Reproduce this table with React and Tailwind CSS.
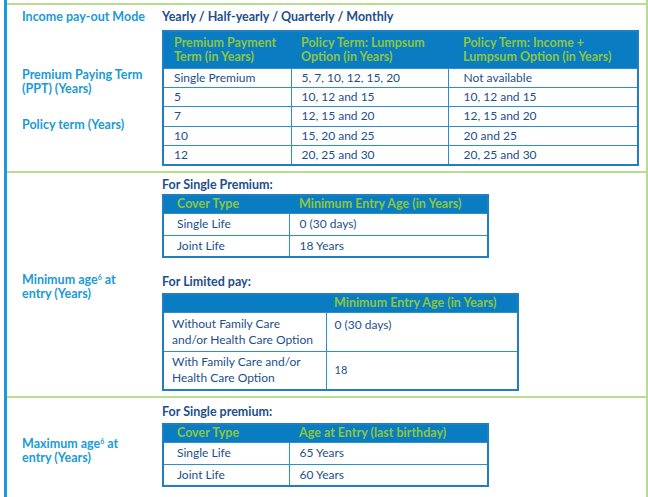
import React from "react";

const navy = "text-[#1d4f8c]";

const HeadCell = ({ children, className = "" }) => (
    <th className={`text-left align-middle font-bold text-[#8cc63f] text-[12.5px] leading-[14px] ${className}`}>{children}</th>
);

const Cell = ({ children, className = "" }) => (
    <td className={`border border-[#2e8fd0] align-middle ${navy} ${className}`}>{children}</td>
);

const Label = ({ children, className = "" }) => (
    <div className={`font-bold text-[#1b9ad7] text-[12.5px] leading-[14px] ${className}`}>{children}</div>
);

const Heading = ({ children, className = "" }) => (
    <div className={`font-bold text-[12.5px] leading-[14px] ${navy} ${className}`}>{children}</div>
);

const SmallTable = ({ head, rows, widths }) => (
    <table className="border-collapse border-2 border-[#1f7fc2] text-[12px] table-fixed" style={{ width: widths[0] + widths[1] }}>
        <colgroup>
            <col style={{ width: widths[0] }} />
            <col style={{ width: widths[1] }} />
        </colgroup>
        <thead>
            <tr className="bg-[#0a7cc1] h-[18px]">
                <HeadCell className="pl-[13px]">{head[0]}</HeadCell>
                <HeadCell className="pl-[10px]">{head[1]}</HeadCell>
            </tr>
        </thead>
        <tbody>
            {rows.map((r, i) => (
                <tr key={i} className="h-[22px] leading-[14px]">
                    <Cell className="pl-[13px]">{r[0]}</Cell>
                    <Cell className="pl-[10px]">{r[1]}</Cell>
                </tr>
            ))}
        </tbody>
    </table>
);

export default function App() {
    const pptRows = [
        ["Single Premium", "5, 7, 10, 12, 15, 20", "Not available"],
        ["5", "10, 12 and 15", "10, 12 and 15"],
        ["7", "12, 15 and 20", "12, 15 and 20"],
        ["10", "15, 20 and 25", "20 and 25"],
        ["12", "20, 25 and 30", "20, 25 and 30"],
    ];

    return (
        <div className="w-[648px] h-[497px] bg-white flex overflow-hidden" style={{ fontFamily: "Lato, 'Open Sans', sans-serif" }}>
            <div className="ml-[4px] w-[3px] bg-[#1b9ad7] shrink-0" />
            <div className="flex-1 border-r-2 border-[#b9dd8e] flex flex-col">
                {/* income / ppt section */}
                <div className="mt-[3px] border-t-2 border-[#b9dd8e] h-[168px] pt-[4px]">
                    <div className="flex items-center h-[16px]">
                        <Label className="w-[155px] pl-[15px]">Income pay-out Mode</Label>
                        <Heading>Yearly / Half-yearly / Quarterly / Monthly</Heading>
                    </div>
                    <div className="flex mt-[5px]">
                        <div className="w-[155px] pl-[15px] pt-[38px] shrink-0">
                            <Label>Premium Paying Term<br />(PPT) (Years)</Label>
                            <Label className="mt-[22px]">Policy term (Years)</Label>
                        </div>
                        <table className="border-collapse border-2 border-[#1f7fc2] text-[12px] table-fixed w-[475px]">
                            <colgroup>
                                <col className="w-[128px]" />
                                <col className="w-[157px]" />
                                <col className="w-[190px]" />
                            </colgroup>
                            <thead>
                                <tr className="bg-[#0a7cc1] h-[37px]">
                                    <HeadCell className="pl-[10px]">Premium Payment<br />Term (in Years)</HeadCell>
                                    <HeadCell className="pl-[10px]">Policy Term: Lumpsum<br />Option (in Years)</HeadCell>
                                    <HeadCell className="pl-[15px]">Policy Term: Income +<br />Lumpsum Option (in Years)</HeadCell>
                                </tr>
                            </thead>
                            <tbody>
                                {pptRows.map((r) => (
                                    <tr key={r[0]} className="h-[19.4px] leading-[14px]">
                                        <Cell className="pl-[10px]">{r[0]}</Cell>
                                        <Cell className="pl-[10px]">{r[1]}</Cell>
                                        <Cell className="pl-[15px]">{r[2]}</Cell>
                                    </tr>
                                ))}
                            </tbody>
                        </table>
                    </div>
                </div>

                {/* minimum age */}
                <div className="border-t-2 border-[#b9dd8e] h-[225px] flex items-center">
                    <Label className="w-[155px] pl-[15px] pt-[4px] shrink-0">Minimum age<sup className="text-[7px]">6</sup> at<br />entry (Years)</Label>
                    <div className="self-start pt-[5px]">
                        <Heading className="mb-[2px]">For Single Premium:</Heading>
                        <SmallTable
                            widths={[126, 199]}
                            head={["Cover Type", "Minimum Entry Age (in Years)"]}
                            rows={[["Single Life", "0 (30 days)"], ["Joint Life", "18 Years"]]}
                        />
                        <Heading className="mt-[17px] mb-[4px]">For Limited pay:</Heading>
                        <table className="border-collapse border-2 border-[#1f7fc2] text-[12px] table-fixed w-[355px]">
                            <colgroup>
                                <col className="w-[163px]" />
                                <col className="w-[192px]" />
                            </colgroup>
                            <thead>
                                <tr className="bg-[#0a7cc1] h-[18px]">
                                    <HeadCell />
                                    <HeadCell className="pl-[8px]">Minimum Entry Age (in Years)</HeadCell>
                                </tr>
                            </thead>
                            <tbody>
                                <tr className="h-[39px] leading-[16px]">
                                    <Cell className="pl-[8px]">Without Family Care<br />and/or Health Care Option</Cell>
                                    <Cell className="pl-[8px] align-top pt-[4px]">0 (30 days)</Cell>
                                </tr>
                                <tr className="h-[39px] leading-[16px]">
                                    <Cell className="pl-[8px]">With Family Care and/or<br />Health Care Option</Cell>
                                    <Cell className="pl-[8px] text-[11px]">18</Cell>
                                </tr>
                            </tbody>
                        </table>
                    </div>
                </div>

                {/* maximum age */}
                <div className="border-t-2 border-[#b9dd8e] flex-1 flex items-center">
                    <Label className="w-[155px] pl-[15px] pt-[6px] shrink-0">Maximum age<sup className="text-[7px]">6</sup> at<br />entry (Years)</Label>
                    <div className="self-start pt-[7px]">
                        <Heading className="mb-[4px]">For Single premium:</Heading>
                        <SmallTable
                            widths={[126, 199]}
                            head={["Cover Type", "Age at Entry (last birthday)"]}
                            rows={[["Single Life", "65 Years"], ["Joint Life", "60 Years"]]}
                        />
                    </div>
                </div>
            </div>
        </div>
    );
}
